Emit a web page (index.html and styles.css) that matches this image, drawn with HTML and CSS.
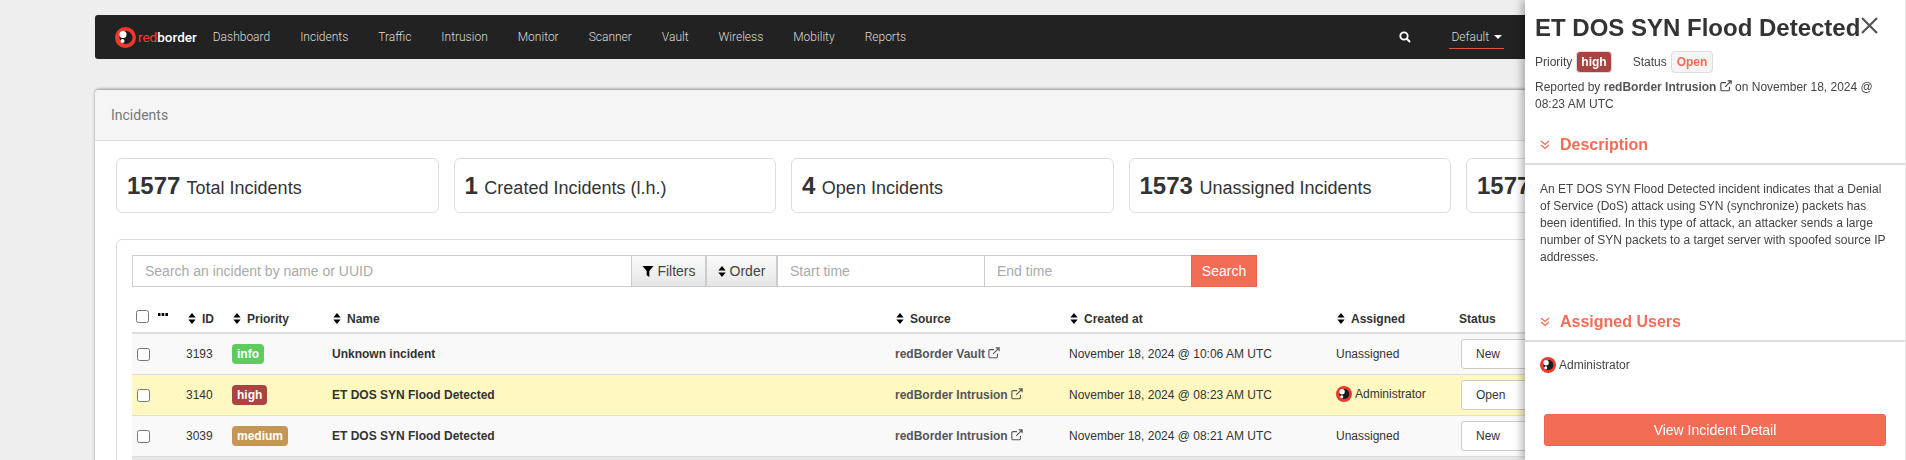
FILE: index.html
```html
<!DOCTYPE html>
<html lang="en">
<head>
    <meta charset="UTF-8">
    <meta name="viewport" content="width=device-width, initial-scale=1.0">
    <title>Incidents</title>
    <link rel="stylesheet" href="styles.css">
</head>
<body>
    <svg class="sprites" width="0" height="0">
        <symbol id="i-sort" viewBox="0 0 8 12"><path d="M4 0 8 5H0zM0 7h8l-4 5z"/></symbol>
        <symbol id="i-link" viewBox="0 0 14 14"><path d="M11 8v3a1.500 1.500 0 0 1-1.500 1.500H2.500A1.500 1.500 0 0 1 1 11V4.500A1.500 1.500 0 0 1 2.500 3H7M9 1h4v4M13 1 6 8" fill="none" stroke="currentColor" stroke-width="1.300"/></symbol>
        <symbol id="i-logo" viewBox="0 0 21 21"><circle cx="10.500" cy="10.500" r="10.500" fill="#ee3a2c"/><circle cx="11" cy="10.500" r="6.500" fill="#1b1b1b"/><circle cx="8" cy="7.500" r="3.500" fill="#fff"/><circle cx="7.500" cy="14" r="2" fill="#fff"/></symbol>
        <symbol id="i-chevrons" viewBox="0 0 10 10"><path d="M1 1l4 3.500L9 1M1 5l4 3.500L9 5" fill="none" stroke="currentColor" stroke-width="1.300"/></symbol>
    </svg>

    <nav class="navbar">
        <a class="brand">
            <svg class="brand-logo"><use href="#i-logo"/></svg>
            <span class="brand-text"><span class="brand-red">red</span>border</span>
        </a>
        <ul class="nav-links">
            <li>Dashboard</li>
            <li>Incidents</li>
            <li>Traffic</li>
            <li>Intrusion</li>
            <li>Monitor</li>
            <li>Scanner</li>
            <li>Vault</li>
            <li>Wireless</li>
            <li>Mobility</li>
            <li>Reports</li>
        </ul>
        <div class="nav-right">
            <svg class="nav-search" viewBox="0 0 12 12"><circle cx="5" cy="5" r="3.700" fill="none" stroke="#fff" stroke-width="1.800"/><path d="M7.800 7.800 11 11" stroke="#fff" stroke-width="2"/></svg>
            <span class="nav-domain">Default <i class="caret"></i></span>
        </div>
    </nav>

    <section class="card">
        <div class="card-header">Incidents</div>
        <div class="card-body">
            <div class="stats">
                <div class="stat"><b>1577</b> Total Incidents</div>
                <div class="stat"><b>1</b> Created Incidents (l.h.)</div>
                <div class="stat"><b>4</b> Open Incidents</div>
                <div class="stat"><b>1573</b> Unassigned Incidents</div>
                <div class="stat"><b>1577</b></div>
            </div>

            <div class="list-box">
                <form class="search-row">
                    <input class="field field-name" type="text" placeholder="Search an incident by name or UUID">
                    <button class="tool-btn btn-filters" type="button">
                        <svg class="funnel" viewBox="0 0 10 10"><path d="M0 0h10L6.200 4.600V10L3.800 8.400V4.600z"/></svg> Filters
                    </button>
                    <button class="tool-btn btn-order" type="button">
                        <svg class="sort sort-btn"><use href="#i-sort"/></svg> Order
                    </button>
                    <input class="field field-time" type="text" placeholder="Start time">
                    <input class="field field-time" type="text" placeholder="End time">
                    <button class="search-btn" type="button">Search</button>
                </form>

                <table class="incidents">
                    <colgroup>
                        <col class="col-check">
                        <col class="col-id">
                        <col class="col-priority">
                        <col class="col-name">
                        <col class="col-source">
                        <col class="col-created">
                        <col class="col-assigned">
                        <col>
                    </colgroup>
                    <thead>
                        <tr>
                            <th class="check-cell">
                                <input class="check-all" type="checkbox">
                                <svg class="dots" viewBox="0 0 10 3"><path d="M0 0h2.500v3H0zM3.700 0h2.500v3H3.700zM7.400 0H10v3H7.400z"/></svg>
                            </th>
                            <th class="th-id"><svg class="sort"><use href="#i-sort"/></svg>ID</th>
                            <th class="th-sort"><svg class="sort"><use href="#i-sort"/></svg>Priority</th>
                            <th class="th-sort"><svg class="sort"><use href="#i-sort"/></svg>Name</th>
                            <th class="th-sort"><svg class="sort"><use href="#i-sort"/></svg>Source</th>
                            <th class="th-sort"><svg class="sort"><use href="#i-sort"/></svg>Created at</th>
                            <th class="th-sort"><svg class="sort"><use href="#i-sort"/></svg>Assigned</th>
                            <th class="th-status">Status</th>
                        </tr>
                    </thead>
                    <tbody>
                        <tr>
                            <td class="check-cell"><input type="checkbox"></td>
                            <td>3193</td>
                            <td><span class="badge badge-info">info</span></td>
                            <td class="incident-name">Unknown incident</td>
                            <td class="source">redBorder Vault <svg class="ext"><use href="#i-link"/></svg></td>
                            <td>November 18, 2024 @ 10:06 AM UTC</td>
                            <td>Unassigned</td>
                            <td><div class="status-select">New</div></td>
                        </tr>
                        <tr class="selected">
                            <td class="check-cell"><input type="checkbox"></td>
                            <td>3140</td>
                            <td><span class="badge badge-high">high</span></td>
                            <td class="incident-name">ET DOS SYN Flood Detected</td>
                            <td class="source">redBorder Intrusion <svg class="ext"><use href="#i-link"/></svg></td>
                            <td>November 18, 2024 @ 08:23 AM UTC</td>
                            <td><span class="user"><svg class="avatar"><use href="#i-logo"/></svg>Administrator</span></td>
                            <td><div class="status-select">Open</div></td>
                        </tr>
                        <tr>
                            <td class="check-cell"><input type="checkbox"></td>
                            <td>3039</td>
                            <td><span class="badge badge-medium">medium</span></td>
                            <td class="incident-name">ET DOS SYN Flood Detected</td>
                            <td class="source">redBorder Intrusion <svg class="ext"><use href="#i-link"/></svg></td>
                            <td>November 18, 2024 @ 08:21 AM UTC</td>
                            <td>Unassigned</td>
                            <td><div class="status-select">New</div></td>
                        </tr>
                    </tbody>
                </table>
                <div class="table-end"></div>
            </div>
        </div>
    </section>

    <aside class="panel">
        <div class="panel-top">
            <h2>ET DOS SYN Flood Detected</h2>
            <svg class="panel-close" viewBox="0 0 17 17"><path d="M1 1l15 15M16 1 1 16" stroke="#555" stroke-width="2.200" fill="none"/></svg>
        </div>
        <div class="panel-meta">
            <span>Priority</span>
            <span class="badge badge-high">high</span>
            <span class="meta-status">Status</span>
            <span class="badge badge-open">Open</span>
        </div>
        <p class="reported">Reported by <b>redBorder Intrusion</b> <svg class="ext"><use href="#i-link"/></svg> on November 18, 2024 @<br>08:23 AM UTC</p>

        <h3 class="panel-heading"><svg class="chevrons"><use href="#i-chevrons"/></svg>Description</h3>
        <p class="panel-text">An ET DOS SYN Flood Detected incident indicates that a Denial of Service (DoS) attack using SYN (synchronize) packets has been identified. In this type of attack, an attacker sends a large number of SYN packets to a target server with spoofed source IP addresses.</p>

        <h3 class="panel-heading heading-users"><svg class="chevrons"><use href="#i-chevrons"/></svg>Assigned Users</h3>
        <div class="panel-user"><svg class="avatar"><use href="#i-logo"/></svg>Administrator</div>

        <button class="detail-btn" type="button">View Incident Detail</button>
    </aside>
</body>
</html>
```

FILE: styles.css
```css
html, body {
    height: 100%;
    overflow: hidden;
}

body {
    margin: 0;
    padding: 15px 95px 0;
    box-sizing: border-box;
    background-color: #eeeeee;
    color: #333;
    font-family: "Liberation Sans", Arial, sans-serif;
    font-size: 12px;
}

.sprites {
    position: absolute;
}

/* navbar */
.navbar {
    display: flex;
    align-items: center;
    height: 44px;
    padding: 0 20px;
    background-color: #222;
    border-radius: 3px;
    font-family: Roboto, sans-serif;
    font-weight: 300;
    font-size: 12px;
    color: #ddd;
}

.brand {
    display: flex;
    align-items: center;
    margin-right: 16px;
}

.brand-logo {
    width: 21px;
    height: 21px;
    margin-right: 2px;
}

.brand-text {
    font-size: 13.5px;
    font-weight: 500;
    color: #fff;
}

.brand-red {
    color: #ff3b2e;
    font-weight: 400;
}

.nav-links {
    display: flex;
    gap: 30px;
    margin: 0;
    padding: 0;
    list-style: none;
}

.nav-right {
    display: flex;
    align-items: center;
    margin-left: auto;
    margin-right: 287px;
}

.nav-search {
    width: 12px;
    height: 12px;
    margin-right: 38px;
}

.nav-domain {
    padding: 4px 2px 4px 2px;
    border-bottom: 1px solid #e0533f;
    white-space: nowrap;
}

.caret {
    display: inline-block;
    margin-left: 2px;
    vertical-align: middle;
    border-top: 4px solid #fff;
    border-left: 4px solid transparent;
    border-right: 4px solid transparent;
}

/* main card */
.card {
    margin-top: 31px;
    background-color: #fff;
    border-radius: 4px;
    box-shadow: 0 -1px 3px rgba(0, 0, 0, 0.4);
}

.card-header {
    height: 50px;
    padding-left: 16px;
    line-height: 50px;
    background-color: #f5f5f5;
    border-bottom: 1px solid #ddd;
    border-radius: 4px 4px 0 0;
    font-family: Roboto, sans-serif;
    font-size: 14px;
    color: #777;
}

.card-body {
    padding: 17px 21px 0;
}

.stats {
    display: grid;
    grid-template-columns: repeat(5, 322.5px);
    gap: 15px;
}

.stat {
    height: 55px;
    box-sizing: border-box;
    padding-left: 10px;
    line-height: 54px;
    border: 1px solid #ddd;
    border-radius: 6px;
    font-size: 18px;
}

.stat b {
    margin-right: 1.5px;
    font-size: 24px;
}

.list-box {
    margin-top: 26px;
    padding: 15px;
    border: 1px solid #ddd;
    border-radius: 6px;
}

/* search row */
.search-row {
    display: flex;
    height: 32px;
    width: 1125px;
}

.field {
    box-sizing: border-box;
    height: 32px;
    padding: 0 12px;
    border: 1px solid #ccc;
    border-right: 0;
    outline: 0;
    font-family: inherit;
    font-size: 14px;
    color: #333;
}

.field::placeholder {
    color: #aaa;
}

.field-name {
    flex: 1;
}

.field-time {
    width: 207px;
}

.tool-btn {
    box-sizing: border-box;
    height: 32px;
    padding: 0;
    border: 1px solid #ccc;
    background: linear-gradient(#fbfbfb, #e6e6e6);
    font-family: inherit;
    font-size: 14px;
    color: #444;
}

.btn-filters {
    width: 75px;
}

.btn-order {
    width: 71px;
}

.funnel {
    width: 12px;
    height: 11px;
    vertical-align: -1px;
}

.search-btn {
    width: 66px;
    height: 32px;
    padding: 0;
    border: 1px solid #ee6350;
    background-color: #f26c56;
    font-family: inherit;
    font-size: 14px;
    color: #fff;
}

/* table */
.incidents {
    width: 100%;
    margin-top: 16px;
    table-layout: fixed;
    border-collapse: collapse;
}

.col-check { width: 49px; }
.col-id { width: 46px; }
.col-priority { width: 100px; }
.col-name { width: 563px; }
.col-source { width: 174px; }
.col-created { width: 267px; }
.col-assigned { width: 125px; }

.incidents th {
    height: 26px;
    padding: 3px 5px 0;
    text-align: left;
    font-size: 12px;
    border-bottom: 2px solid #ddd;
}

.incidents td {
    height: 40px;
    padding: 0 5px;
    border-bottom: 1px solid #ddd;
    background-color: #f9f9f9;
}

.incidents .selected td {
    background-color: #fff8c0;
}

.incidents input {
    margin: 0;
    vertical-align: middle;
}

.incidents .check-cell {
    padding-left: 5px;
}

.incidents th.check-cell {
    padding-left: 4px;
}

.incidents .check-all {
    margin-bottom: 5px;
}

.dots {
    width: 10px;
    height: 3px;
    margin-left: 6px;
    vertical-align: 6px;
}

.sort {
    width: 8px;
    height: 11px;
    margin-right: 6px;
    vertical-align: -1px;
}

.th-id .sort {
    margin-left: 2px;
}

.th-sort .sort {
    margin-left: 1px;
}

.sort-btn {
    margin-right: 0;
}

.incidents .th-status {
    padding-left: 3px;
}

.incident-name {
    font-weight: bold;
}

.source {
    font-weight: bold;
    color: #555;
}

.ext {
    width: 12px;
    height: 12px;
    vertical-align: -1px;
}

.badge {
    display: inline-block;
    height: 20px;
    padding: 0 5px;
    line-height: 20px;
    border-radius: 4px;
    font-size: 12px;
    font-weight: bold;
    color: #fff;
}

.badge-info { background-color: #5dcb5d; }
.badge-high { background-color: #a94442; }
.badge-medium { background-color: #c49653; }

.user {
    display: inline-flex;
    align-items: center;
    gap: 3px;
}

.avatar {
    width: 16px;
    height: 16px;
}

.status-select {
    box-sizing: border-box;
    height: 30px;
    padding-left: 14px;
    line-height: 28px;
    background-color: #fff;
    border: 1px solid #ccc;
    border-radius: 3px;
}

.table-end {
    height: 4px;
    background-color: #e6e6e6;
}

/* side panel */
.panel {
    position: fixed;
    top: 0;
    right: 0;
    bottom: 0;
    width: 381px;
    box-sizing: border-box;
    background-color: #fff;
    border-right: 1px solid #e5e5e5;
    box-shadow: -3px 0 8px rgba(0, 0, 0, 0.3);
    color: #444;
}

.panel-top {
    display: flex;
    align-items: flex-start;
    padding: 14px 0 0 10px;
}

.panel h2 {
    margin: 0;
    font-size: 24px;
    line-height: 28px;
    color: #333;
}

.panel-close {
    width: 17px;
    height: 17px;
    margin: 3px 0 0 1px;
}

.panel-meta {
    display: flex;
    align-items: center;
    height: 22px;
    margin: 9px 0 0 10px;
}

.panel-meta .badge {
    margin-left: 4px;
    height: 22px;
    line-height: 20px;
    box-sizing: border-box;
    border: 1px solid #ddd;
}

.panel-meta .badge-high {
    padding: 0 4px;
}

.meta-status {
    margin-left: 21px;
}

.panel-meta .badge-open {
    background-color: #f5f5f5;
    color: #f26c56;
}

.reported {
    margin: 6px 14px 0 10px;
    line-height: 17px;
}

.reported b {
    color: #555;
}

.panel-heading {
    margin: 22px 0 0;
    padding: 0 0 8px 15px;
    display: flex;
    align-items: center;
    line-height: 20px;
    font-size: 16px;
    color: #f26c56;
    border-bottom: 2px solid #ddd;
}

.heading-users {
    margin-top: 46px;
}

.chevrons {
    width: 10px;
    height: 10px;
    margin-right: 10px;
    color: #f26c56;
}

.panel-text {
    margin: 0;
    padding: 16px 14px 0 15px;
    line-height: 17px;
}

.panel-user {
    display: flex;
    align-items: center;
    gap: 3px;
    padding: 15px 0 0 15px;
}

.detail-btn {
    display: block;
    width: 342px;
    height: 32px;
    margin: 41px 0 0 19px;
    padding: 0;
    background-color: #f26c56;
    border: 1px solid #ee6350;
    border-radius: 3px;
    font-family: inherit;
    font-size: 14px;
    color: #fff;
}
```
